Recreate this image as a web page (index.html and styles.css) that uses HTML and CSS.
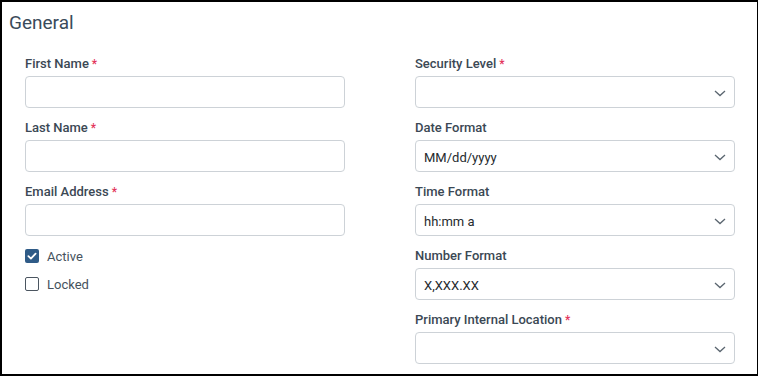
FILE: index.html
```html
<!DOCTYPE html>
<html lang="en">
<head>
    <meta charset="UTF-8">
    <title>General</title>
    <link rel="stylesheet" href="styles.css">
</head>
<body>
    <div class="panel">
        <h2 class="panel-title">General</h2>
        <div class="form-grid">
            <div class="form-col">
                <div class="field">
                    <label class="field-label">First Name<span class="req">*</span></label>
                    <div class="input"></div>
                </div>
                <div class="field">
                    <label class="field-label">Last Name<span class="req">*</span></label>
                    <div class="input"></div>
                </div>
                <div class="field">
                    <label class="field-label">Email Address<span class="req">*</span></label>
                    <div class="input"></div>
                </div>
                <div class="checks">
                    <div class="check-row">
                        <span class="box checked">
                            <svg viewBox="0 0 14 14" width="14" height="14"><path d="M3.4 7.2 L5.9 9.6 L10.6 4.6" fill="none" stroke="#fff" stroke-width="1.8" stroke-linecap="round" stroke-linejoin="round"/></svg>
                        </span>
                        <span class="check-label">Active</span>
                    </div>
                    <div class="check-row">
                        <span class="box"></span>
                        <span class="check-label">Locked</span>
                    </div>
                </div>
            </div>
            <div class="form-col">
                <div class="field">
                    <label class="field-label">Security Level<span class="req">*</span></label>
                    <div class="input select"><span class="value"></span><svg class="chev" viewBox="0 0 12 7" width="12" height="7"><path d="M1 1 L6 5.6 L11 1" fill="none" stroke="#5b6670" stroke-width="1.3"/></svg></div>
                </div>
                <div class="field">
                    <label class="field-label">Date Format</label>
                    <div class="input select"><span class="value">MM/dd/yyyy</span><svg class="chev" viewBox="0 0 12 7" width="12" height="7"><path d="M1 1 L6 5.6 L11 1" fill="none" stroke="#5b6670" stroke-width="1.3"/></svg></div>
                </div>
                <div class="field">
                    <label class="field-label">Time Format</label>
                    <div class="input select"><span class="value">hh:mm a</span><svg class="chev" viewBox="0 0 12 7" width="12" height="7"><path d="M1 1 L6 5.6 L11 1" fill="none" stroke="#5b6670" stroke-width="1.3"/></svg></div>
                </div>
                <div class="field">
                    <label class="field-label">Number Format</label>
                    <div class="input select"><span class="value">X,XXX.XX</span><svg class="chev" viewBox="0 0 12 7" width="12" height="7"><path d="M1 1 L6 5.6 L11 1" fill="none" stroke="#5b6670" stroke-width="1.3"/></svg></div>
                </div>
                <div class="field">
                    <label class="field-label">Primary Internal Location<span class="req">*</span></label>
                    <div class="input select"><span class="value"></span><svg class="chev" viewBox="0 0 12 7" width="12" height="7"><path d="M1 1 L6 5.6 L11 1" fill="none" stroke="#5b6670" stroke-width="1.3"/></svg></div>
                </div>
            </div>
        </div>
    </div>
</body>
</html>
```

FILE: styles.css
```css
html, body {
    margin: 0;
    height: 100%;
}

body {
    font-family: Roboto, "Liberation Sans", sans-serif;
    background-color: #fff;
    color: #333;
    overflow: hidden;
}

.panel {
    box-sizing: border-box;
    width: 758px;
    height: 376px;
    border: 2px solid #000;
    border-right-width: 1px;
    padding: 0 22px 0 23px;
}

.panel-title {
    margin: 9px 0 0 -16px;
    font-size: 19px;
    font-weight: 400;
    line-height: 24px;
    color: #3a4b5a;
}

.form-grid {
    display: grid;
    grid-template-columns: 320px 320px;
    column-gap: 70px;
    margin-top: 21px;
}

.form-col {
    display: flex;
    flex-direction: column;
    gap: 12px;
}

.field {
    display: flex;
    flex-direction: column;
    gap: 4px;
}

.field-label {
    font-size: 13px;
    font-weight: 500;
    line-height: 16px;
    color: #3b4854;
}

.req {
    color: #e3345a;
    margin-left: 3px;
    font-size: 12px;
}

.input {
    box-sizing: border-box;
    height: 32px;
    border: 1px solid #cdd2d7;
    border-radius: 4px;
    background: #fff;
}

.select {
    display: flex;
    align-items: center;
    justify-content: space-between;
    padding: 2px 8px 0 8px;
}

.select .value {
    font-size: 13px;
    color: #252a2e;
}

.checks {
    display: flex;
    flex-direction: column;
    gap: 12px;
}

.check-row {
    display: flex;
    align-items: center;
    gap: 8px;
    height: 16px;
}

.box {
    box-sizing: border-box;
    width: 14px;
    height: 14px;
    border: 1.5px solid #4b5560;
    border-radius: 2px;
    display: flex;
}

.box.checked {
    border: none;
    background: #2f5b87;
}

.check-label {
    font-size: 13px;
    color: #46525d;
}
```
